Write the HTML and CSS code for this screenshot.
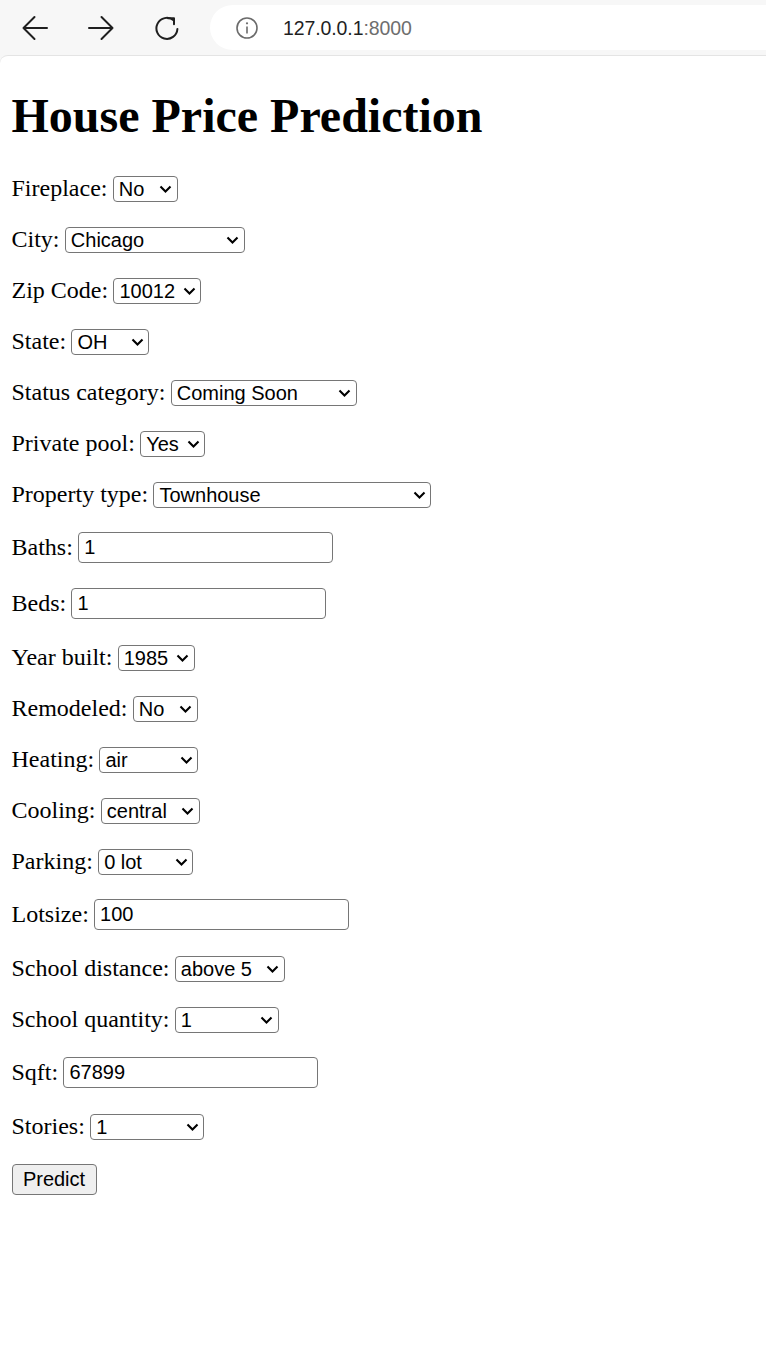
FILE: index.html
```html
<!DOCTYPE html>
<html lang="en">
<head>
<meta charset="utf-8">
<title>House Price Prediction</title>
<link rel="stylesheet" href="styles.css">
</head>
<body>
<header class="toolbar">
  <span class="nav-btn" aria-label="Back">
    <svg class="nav-icon" viewBox="0 0 28 28"><path d="M26 14H2.5M13.5 3L2.5 14L13.5 25"/></svg>
  </span>
  <span class="nav-btn" aria-label="Forward">
    <svg class="nav-icon" viewBox="0 0 28 28"><path d="M2 14H25.5M14.5 3L25.5 14L14.5 25"/></svg>
  </span>
  <span class="nav-btn" aria-label="Reload">
    <svg class="nav-icon" viewBox="0 0 28 28"><path d="M20.5 6.2A10.5 10.5 0 1 0 24.4 15"/><path d="M15 4.2H21V10.2"/></svg>
  </span>
  <div class="omnibox">
    <svg class="info-icon" viewBox="0 0 22 22"><circle cx="11" cy="11" r="10"/><path d="M11 9.5V16.5"/><circle class="dot" cx="11" cy="6.3" r="1.1"/></svg>
    <span class="url"><span class="host">127.0.0.1</span><span class="port">:8000</span></span>
  </div>
</header>

<main class="viewport">
  <h1 class="title">House Price Prediction</h1>
  <form class="form">
    <p class="row"><label for="fireplace">Fireplace:</label><span class="sel w-fireplace"><select id="fireplace"><option>No</option><option>Yes</option></select><svg class="chev" viewBox="0 0 12 8"><path d="M1 1.5L6 6.5L11 1.5"/></svg></span></p>
    <p class="row"><label for="city">City:</label><span class="sel w-city"><select id="city"><option>Chicago</option><option>Houston</option><option>Miami</option><option>New York</option><option>San Antonio</option></select><svg class="chev" viewBox="0 0 12 8"><path d="M1 1.5L6 6.5L11 1.5"/></svg></span></p>
    <p class="row"><label for="zip">Zip Code:</label><span class="sel w-zip"><select id="zip"><option>10012</option><option>60614</option><option>77002</option><option>33101</option></select><svg class="chev" viewBox="0 0 12 8"><path d="M1 1.5L6 6.5L11 1.5"/></svg></span></p>
    <p class="row"><label for="state">State:</label><span class="sel w-state"><select id="state"><option>OH</option><option>TX</option><option>FL</option><option>NY</option><option>IL</option></select><svg class="chev" viewBox="0 0 12 8"><path d="M1 1.5L6 6.5L11 1.5"/></svg></span></p>
    <p class="row"><label for="status">Status category:</label><span class="sel w-status"><select id="status"><option>Coming Soon</option><option>For Sale</option><option>Pending</option><option>Foreclosure</option></select><svg class="chev" viewBox="0 0 12 8"><path d="M1 1.5L6 6.5L11 1.5"/></svg></span></p>
    <p class="row"><label for="pool">Private pool:</label><span class="sel w-pool"><select id="pool"><option>Yes</option><option>No</option></select><svg class="chev" viewBox="0 0 12 8"><path d="M1 1.5L6 6.5L11 1.5"/></svg></span></p>
    <p class="row"><label for="ptype">Property type:</label><span class="sel w-ptype"><select id="ptype"><option>Townhouse</option><option>Single Family Home</option><option>Condo</option><option>Multi-Family</option></select><svg class="chev" viewBox="0 0 12 8"><path d="M1 1.5L6 6.5L11 1.5"/></svg></span></p>
    <p class="row tall"><label for="baths">Baths:</label><input class="txt" id="baths" type="text" value="1"></p>
    <p class="row tall"><label for="beds">Beds:</label><input class="txt" id="beds" type="text" value="1"></p>
    <p class="row"><label for="year">Year built:</label><span class="sel w-year"><select id="year"><option>1985</option><option>1990</option><option>2000</option><option>2010</option></select><svg class="chev" viewBox="0 0 12 8"><path d="M1 1.5L6 6.5L11 1.5"/></svg></span></p>
    <p class="row"><label for="remodeled">Remodeled:</label><span class="sel w-remodeled"><select id="remodeled"><option>No</option><option>Yes</option></select><svg class="chev" viewBox="0 0 12 8"><path d="M1 1.5L6 6.5L11 1.5"/></svg></span></p>
    <p class="row"><label for="heating">Heating:</label><span class="sel w-heating"><select id="heating"><option>air</option><option>gas</option><option>electric</option></select><svg class="chev" viewBox="0 0 12 8"><path d="M1 1.5L6 6.5L11 1.5"/></svg></span></p>
    <p class="row"><label for="cooling">Cooling:</label><span class="sel w-cooling"><select id="cooling"><option>central</option><option>none</option><option>wall</option></select><svg class="chev" viewBox="0 0 12 8"><path d="M1 1.5L6 6.5L11 1.5"/></svg></span></p>
    <p class="row"><label for="parking">Parking:</label><span class="sel w-parking"><select id="parking"><option>0 lot</option><option>1 lot</option><option>2 lots</option></select><svg class="chev" viewBox="0 0 12 8"><path d="M1 1.5L6 6.5L11 1.5"/></svg></span></p>
    <p class="row tall"><label for="lotsize">Lotsize:</label><input class="txt" id="lotsize" type="text" value="100"></p>
    <p class="row"><label for="sdist">School distance:</label><span class="sel w-sdist"><select id="sdist"><option>above 5</option><option>below 1</option><option>1 to 5</option></select><svg class="chev" viewBox="0 0 12 8"><path d="M1 1.5L6 6.5L11 1.5"/></svg></span></p>
    <p class="row"><label for="sqty">School quantity:</label><span class="sel w-sqty"><select id="sqty"><option>1</option><option>2</option><option>3</option></select><svg class="chev" viewBox="0 0 12 8"><path d="M1 1.5L6 6.5L11 1.5"/></svg></span></p>
    <p class="row tall"><label for="sqft">Sqft:</label><input class="txt" id="sqft" type="text" value="67899"></p>
    <p class="row"><label for="stories">Stories:</label><span class="sel w-stories"><select id="stories"><option>1</option><option>2</option><option>3</option></select><svg class="chev" viewBox="0 0 12 8"><path d="M1 1.5L6 6.5L11 1.5"/></svg></span></p>
    <p class="actions"><button class="btn" type="button">Predict</button></p>
  </form>
</main>
</body>
</html>
```

FILE: styles.css
```css
html, body {
  margin: 0;
  padding: 0;
  background: #f7f7f7;
}

body {
  font-family: "Liberation Serif", "Times New Roman", serif;
  color: #000;
  min-height: 1345px;
  display: flex;
  flex-direction: column;
}

/* ---------- browser chrome ---------- */
.toolbar {
  height: 55px;
  display: flex;
  align-items: center;
  padding-left: 15px;
  gap: 26px;
  flex: none;
}

.nav-btn {
  width: 40px;
  height: 40px;
  display: flex;
  align-items: center;
  justify-content: center;
}

.nav-icon {
  width: 28px;
  height: 28px;
  fill: none;
  stroke: #1f1f1f;
  stroke-width: 2;
  stroke-linecap: round;
  stroke-linejoin: round;
}

.omnibox {
  flex: 1;
  height: 45px;
  margin-left: -3px;
  background: #fff;
  border-radius: 22.5px 0 0 22.5px;
  display: flex;
  align-items: center;
  padding-left: 26px;
  gap: 25px;
}

.info-icon {
  width: 22px;
  height: 22px;
  fill: none;
  stroke: #6b6b6b;
  stroke-width: 1.6;
}

.info-icon .dot {
  fill: #6b6b6b;
  stroke: none;
}

.url {
  font-family: "Liberation Sans", Arial, sans-serif;
  font-size: 19.5px;
  letter-spacing: -0.1px;
  padding-top: 1px;
}

.host {
  color: #1f1f1f;
}

.port {
  color: #6e6e6e;
}

/* ---------- page ---------- */
.viewport {
  flex: 1;
  background: #fff;
  border-top: 1px solid #e4e4e4;
  border-top-left-radius: 8px;
  padding: 0 12px 0 11.5px;
  display: flow-root;
}

.title {
  font-size: 48px;
  line-height: 55px;
  font-weight: bold;
  margin: 32px 0 32px;
}

.form {
  margin: 0;
}

.row {
  display: flex;
  align-items: center;
  gap: 5.3px;
  height: 27px;
  margin: 24px 0;
  font-size: 24px;
}

.row label {
  line-height: 27px;
  white-space: nowrap;
}

.row.tall {
  height: 32px;
  align-items: flex-start;
}

.row.tall label {
  padding-top: 1.5px;
}

.sel {
  position: relative;
  display: inline-flex;
  height: 26px;
}

.sel select {
  -webkit-appearance: none;
  appearance: none;
  width: 100%;
  height: 26px;
  box-sizing: border-box;
  margin: 0;
  padding: 0 0 0 5px;
  border: 1px solid #767676;
  border-radius: 4px;
  background: #fff;
  color: #000;
  font-family: "Liberation Sans", Arial, sans-serif;
  font-size: 20px;
  line-height: 24px;
}

.chev {
  position: absolute;
  right: 5.5px;
  top: 50%;
  width: 13px;
  height: 8px;
  margin-top: -4px;
  fill: none;
  stroke: #000;
  stroke-width: 2.1;
  pointer-events: none;
}

.w-fireplace { width: 65px; }
.w-city { width: 180px; }
.w-zip { width: 88px; }
.w-state { width: 78px; }
.w-status { width: 186px; }
.w-pool { width: 65px; }
.w-ptype { width: 278px; }
.w-year { width: 77px; }
.w-remodeled { width: 65px; }
.w-heating { width: 99px; }
.w-cooling { width: 99px; }
.w-parking { width: 95px; }
.w-sdist { width: 110px; }
.w-sqty { width: 104px; }
.w-stories { width: 114px; }

.txt {
  width: 255px;
  height: 31px;
  box-sizing: border-box;
  margin: 0;
  padding: 0 5px;
  border: 1px solid #767676;
  border-radius: 4px;
  background: #fff;
  color: #000;
  font-family: "Liberation Sans", Arial, sans-serif;
  font-size: 20px;
}

.actions {
  display: flex;
  margin: 24px 0;
}

.btn {
  width: 85px;
  height: 31px;
  box-sizing: border-box;
  margin: 0;
  padding: 0;
  border: 1px solid #767676;
  border-radius: 4px;
  background: #efefef;
  color: #000;
  font-family: "Liberation Sans", Arial, sans-serif;
  font-size: 20px;
}
```
